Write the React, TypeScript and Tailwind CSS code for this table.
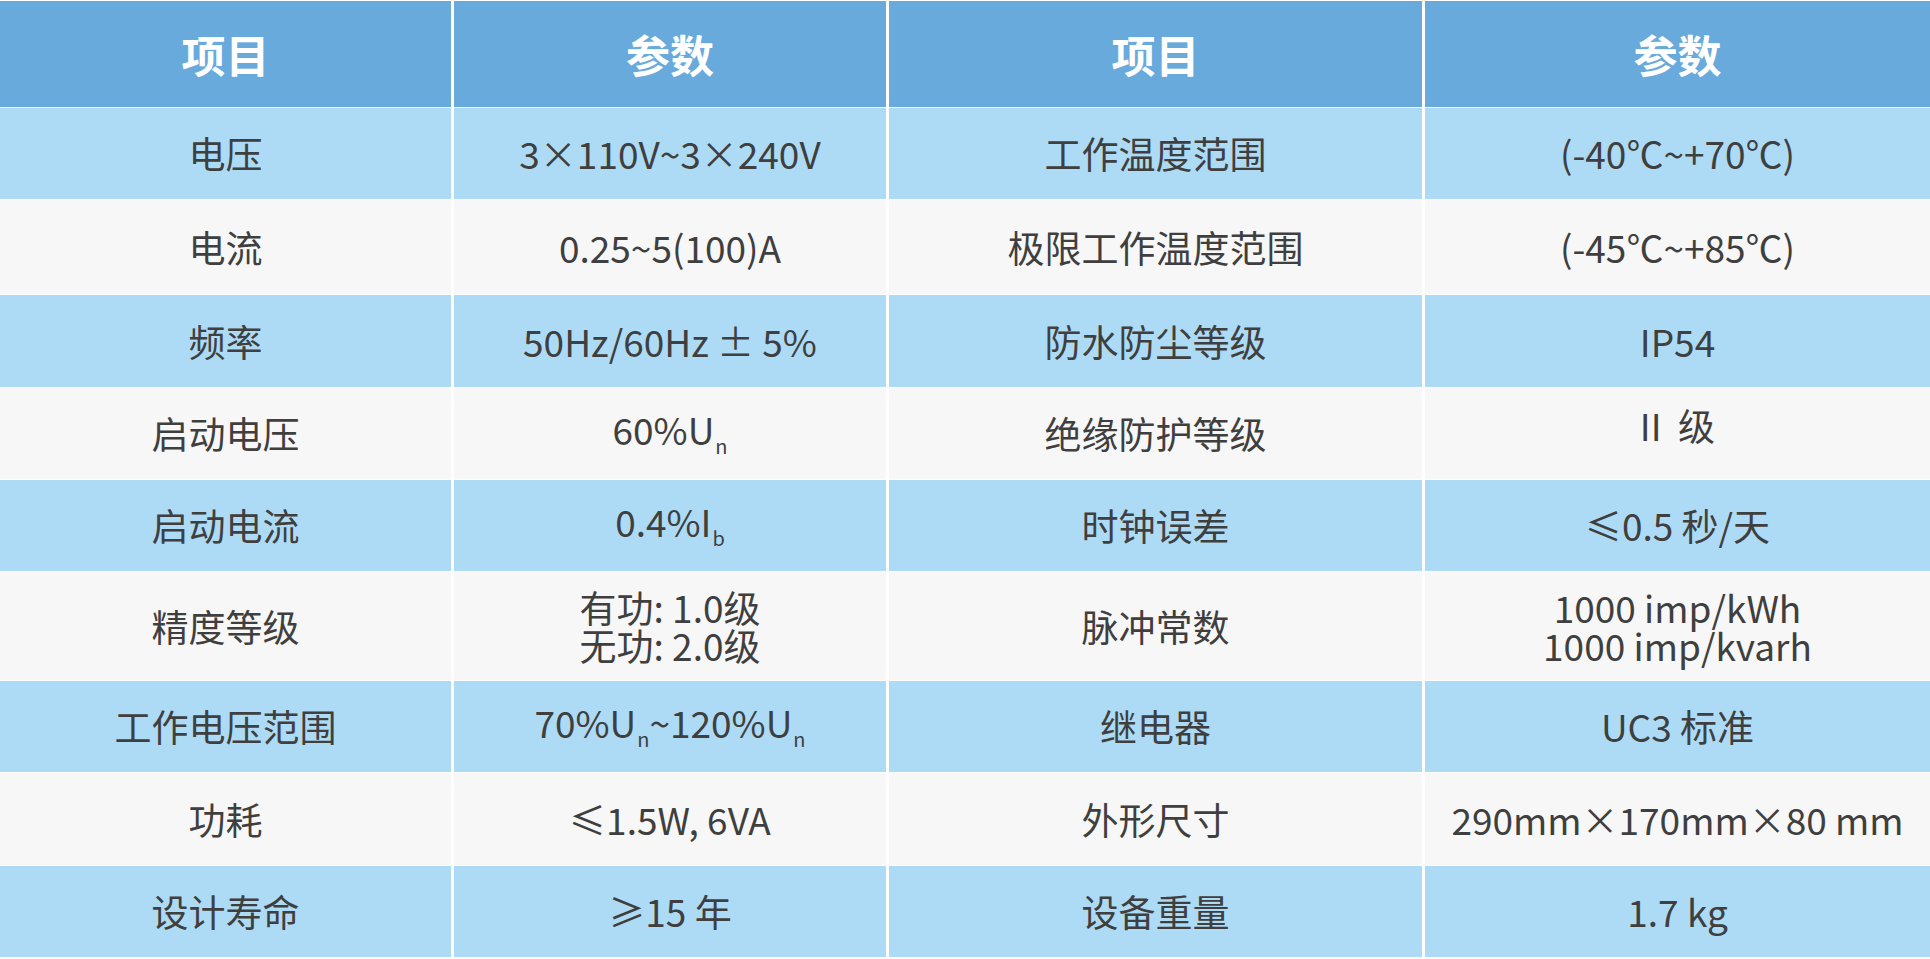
import React from "react";

type Cell = React.ReactNode;

const Sub = ({ t }: { t: string }) => (
  <span className="text-[20px] align-sub ml-[1px]">{t}</span>
);

const rows: { h: string; blue: boolean; cells: Cell[] }[] = [
  { h: "h-[91px]", blue: true, cells: ["电压", "3×110V~3×240V", "工作温度范围", "(-40℃~+70℃)"] },
  { h: "h-[94px]", blue: false, cells: ["电流", "0.25~5(100)A", "极限工作温度范围", "(-45℃~+85℃)"] },
  { h: "h-[92px]", blue: true, cells: ["频率", "50Hz/60Hz ± 5%", "防水防尘等级", "IP54"] },
  {
    h: "h-[91px]",
    blue: false,
    cells: [
      "启动电压",
      <span>
        60%U<Sub t="n" />
      </span>,
      "绝缘防护等级",
      <span className="whitespace-pre pb-[16px]">II  级</span>,
    ],
  },
  {
    h: "h-[91px]",
    blue: true,
    cells: [
      "启动电流",
      <span>
        0.4%I<Sub t="b" />
      </span>,
      "时钟误差",
      "≤0.5 秒/天",
    ],
  },
  {
    h: "h-[108px]",
    blue: false,
    cells: [
      "精度等级",
      <span className="leading-[38px] block">
        有功: 1.0级
        <br />
        无功: 2.0级
      </span>,
      "脉冲常数",
      <span className="leading-[38px] block">
        1000 imp/kWh
        <br />
        1000 imp/kvarh
      </span>,
    ],
  },
  {
    h: "h-[91px]",
    blue: true,
    cells: [
      "工作电压范围",
      <span>
        70%U<Sub t="n" />~120%U<Sub t="n" />
      </span>,
      "继电器",
      "UC3 标准",
    ],
  },
  { h: "h-[92px]", blue: false, cells: ["功耗", "≤1.5W, 6VA", "外形尺寸", "290mm×170mm×80 mm"] },
  { h: "h-[91px]", blue: true, cells: ["设计寿命", "≥15 年", "设备重量", "1.7 kg"] },
];

export default function App() {
  return (
    <div
      className="w-[1930px] h-[959px] bg-white pt-[1px] overflow-hidden"
      style={{ fontFamily: '"Noto Sans CJK SC", "Noto Sans", sans-serif' }}
    >
      <div className="grid grid-cols-[451px_432px_533px_1fr] gap-x-[3px] gap-y-[1px]">
        {["项目", "参数", "项目", "参数"].map((t, i) => (
          <div
            key={"h" + i}
            className="h-[106px] bg-[#68aadc] flex items-center justify-center text-white text-[44px] font-semibold"
          >
            {t}
          </div>
        ))}
        {rows.map((r, ri) =>
          r.cells.map((c, ci) => (
            <div
              key={ri + "-" + ci}
              className={`${r.h} ${
                r.blue ? "bg-[#addbf5]" : "bg-[#f7f7f7]"
              } flex items-center justify-center text-center text-[#3f3f3f] text-[37px] leading-none`}
            >
              {c}
            </div>
          ))
        )}
      </div>
    </div>
  );
}
